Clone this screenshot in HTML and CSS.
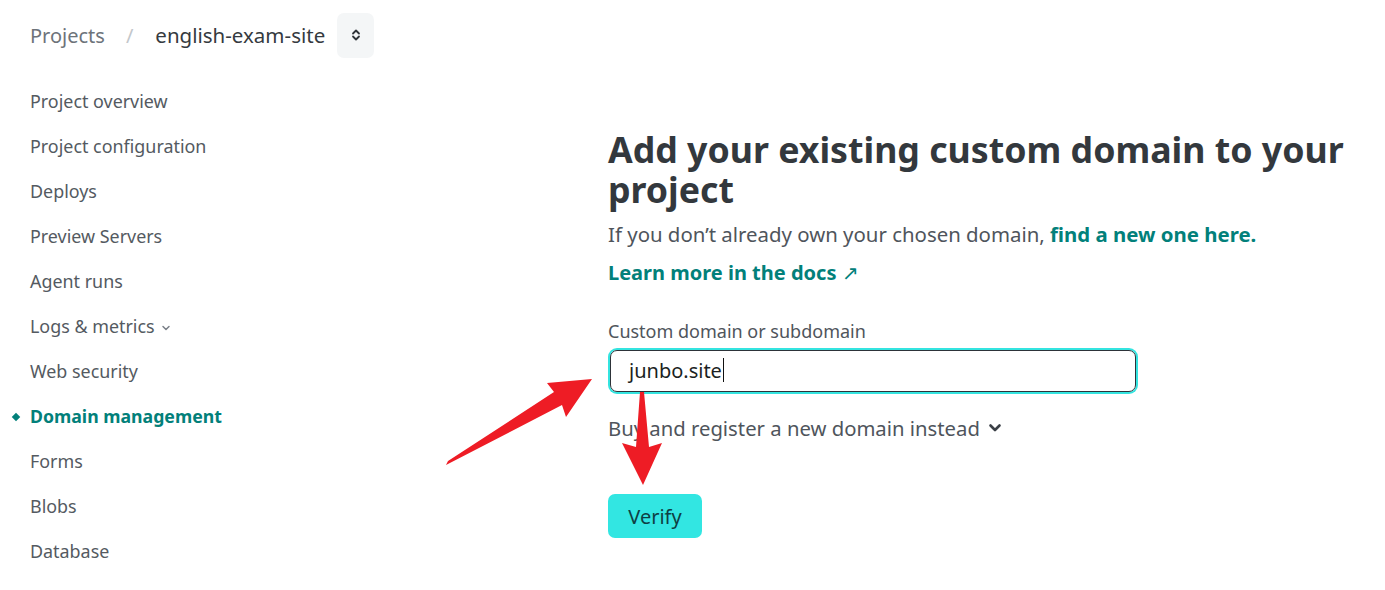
FILE: index.html
```html
<!DOCTYPE html>
<html lang="en">
<head>
<meta charset="utf-8">
<title>Domain management</title>
<link rel="stylesheet" href="styles.css">
</head>
<body>
<div class="page">
  <header class="topbar">
    <span class="crumb">Projects</span>
    <span class="sep">/</span>
    <span class="site">english-exam-site</span>
    <button class="switcher" aria-label="Switch project">
      <svg width="12" height="16" viewBox="0 0 12 16"><path d="M3 6.5 6 3.5 9 6.5M3 9.5 6 12.5 9 9.5" fill="none" stroke="#2e3338" stroke-width="1.8" stroke-linecap="round" stroke-linejoin="round"/></svg>
    </button>
  </header>
  <div class="layout">
    <nav class="sidebar">
      <a class="nav-item">Project overview</a>
      <a class="nav-item">Project configuration</a>
      <a class="nav-item">Deploys</a>
      <a class="nav-item">Preview Servers</a>
      <a class="nav-item">Agent runs</a>
      <a class="nav-item">Logs &amp; metrics <svg class="chev" width="10" height="8" viewBox="0 0 10 8"><path d="M2 2.5 5 5.5 8 2.5" fill="none" stroke="#7b8189" stroke-width="1.5" stroke-linecap="round" stroke-linejoin="round"/></svg></a>
      <a class="nav-item">Web security</a>
      <a class="nav-item active">Domain management</a>
      <a class="nav-item">Forms</a>
      <a class="nav-item">Blobs</a>
      <a class="nav-item">Database</a>
    </nav>
    <main class="main">
      <h1 class="title">Add your existing custom domain to your project</h1>
      <p class="lead">If you don’t already own your chosen domain, <a class="link">find a new one here.</a></p>
      <p class="docs"><a class="link">Learn more in the docs <span class="ext">↗</span></a></p>
      <label class="label">Custom domain or subdomain</label>
      <div class="input"><span class="value">junbo.site</span><span class="caret"></span></div>
      <div class="buy">Buy and register a new domain instead <svg width="14" height="10" viewBox="0 0 14 10"><path d="M2.5 2.5 7 7 11.5 2.5" fill="none" stroke="#3b4047" stroke-width="2.6" stroke-linecap="round" stroke-linejoin="round"/></svg></div>
      <button class="verify">Verify</button>
    </main>
  </div>
  <svg class="annot" width="1385" height="590" viewBox="0 0 1385 590">
    <polygon fill="#ee1c25" points="446,465 562,405 566,417 592,379 547,383 554,392 448,461"/>
    <polygon fill="#ee1c25" points="640,392 644,392 649,447 662,443 643,485 622,443 636,447"/>
  </svg>
</div>
</body>
</html>
```
FILE: styles.css
```css
* { box-sizing: border-box; }
html, body { margin: 0; padding: 0; background: #ffffff; }
body {
  font-family: "Noto Sans", "Open Sans", "Liberation Sans", sans-serif;
  color: #4f555c;
  width: 1385px;
  height: 590px;
  overflow: hidden;
}
.page { position: relative; width: 1385px; height: 590px; }
.topbar {
  display: flex;
  align-items: center;
  height: 70px;
  padding: 0 0 0 30px;
}
.crumb { font-size: 20px; color: #6d737a; }
.sep { font-size: 20px; color: #c3c7cb; margin: 0 22px 0 21px; }
.site { font-size: 20.5px; color: #353a40; }
.switcher {
  margin-left: 12px;
  width: 37px;
  height: 45px;
  border: none;
  border-radius: 7px;
  background: #f4f6f7;
  display: flex;
  align-items: center;
  justify-content: center;
  padding: 0;
}
.layout { display: grid; grid-template-columns: 608px 1fr; }
.sidebar {
  display: flex;
  flex-direction: column;
  padding: 9px 0 0 30px;
}
.nav-item {
  height: 45px;
  line-height: 45px;
  font-size: 17.9px;
  color: #545a61;
  position: relative;
  display: flex;
  align-items: center;
  gap: 6px;
}
.chev { margin-top: 2px; }
.nav-item.active { color: #02807a; font-weight: 700; font-size: 17.7px; }
.nav-item.active::before {
  content: "";
  position: absolute;
  left: -17px;
  top: 20px;
  width: 6px;
  height: 6px;
  background: #02807a;
  transform: rotate(45deg);
}
.main { padding: 59px 30px 0 0; }
.title {
  margin: 0;
  font-size: 35.7px;
  line-height: 40px;
  font-weight: 700;
  color: #33383d;
  max-width: 760px;
}
.lead { margin: 9px 0 0; font-size: 20.4px; line-height: 32px; color: #4f555c; }
.link { color: #02807a; font-weight: 700; }
.docs { margin: 7px 0 0; font-size: 20px; line-height: 32px; }
.ext { font-weight: 400; }
.label { display: block; margin-top: 29px; font-size: 18px; line-height: 26px; color: #4f555c; }
.input {
  margin-top: 6px;
  margin-left: 2px;
  width: 526px;
  height: 42px;
  border: 1px solid #2d3339;
  border-radius: 7px;
  box-shadow: 0 0 0 2px #34e4e0;
  display: flex;
  align-items: center;
  padding-left: 18px;
  padding-bottom: 2px;
  font-size: 20px;
  color: #1b1f23;
}
.caret { display: inline-block; width: 1.5px; height: 24px; background: #111; margin-left: 1px; }
.buy {
  margin-top: 20px;
  font-size: 20.3px;
  line-height: 32px;
  color: #4f555c;
  display: flex;
  align-items: center;
  gap: 8px;
}
.verify {
  margin-top: 50px;
  width: 94px;
  height: 44px;
  border: none;
  border-radius: 7px;
  background: #32e6e2;
  color: #0e3f44;
  font-family: inherit;
  font-size: 20px;
  padding: 0;
}
.annot { position: absolute; left: 0; top: 0; pointer-events: none; }
```
